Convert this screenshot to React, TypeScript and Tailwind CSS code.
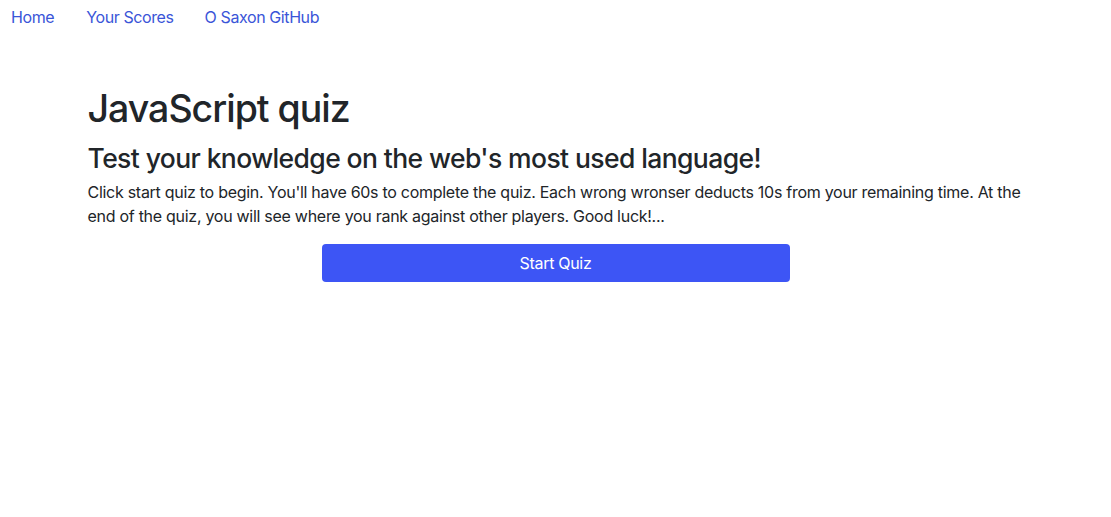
export default function App() {
  return (
    <div className="min-h-[517px] bg-white text-[#212529]" style={{ fontFamily: 'Inter, "Noto Sans", sans-serif' }}>
      <nav className="flex pt-[5px] text-[16px] leading-[24px] tracking-[-0.4px] text-[#3a55d8]">
        <a className="ml-[11px]">Home</a>
        <a className="ml-[32px]">Your Scores</a>
        <a className="ml-[31px]">O Saxon GitHub</a>
      </nav>
      <main className="mx-auto mt-[57px] w-[936px]">
        <h1 className="text-[37.5px] leading-[45px] font-medium tracking-[-1px]">JavaScript quiz</h1>
        <h2 className="mt-[11px] text-[26.5px] leading-[32px] font-medium tracking-[-0.6px]">Test your knowledge on the web's most used language!</h2>
        <p className="mt-[6px] text-[16px] leading-[24px] tracking-[-0.28px]">
          Click start quiz to begin. You'll have 60s to complete the quiz. Each wrong wronser deducts 10s from your remaining time. At the end of the quiz, you will see where you rank against other players. Good luck!...
        </p>
        <div className="mt-[16px] flex justify-center">
          <button className="h-[38px] w-[468px] rounded-[4px] bg-[#3d55f5] text-[16px] tracking-[-0.3px] text-white">Start Quiz</button>
        </div>
      </main>
    </div>
  );
}
